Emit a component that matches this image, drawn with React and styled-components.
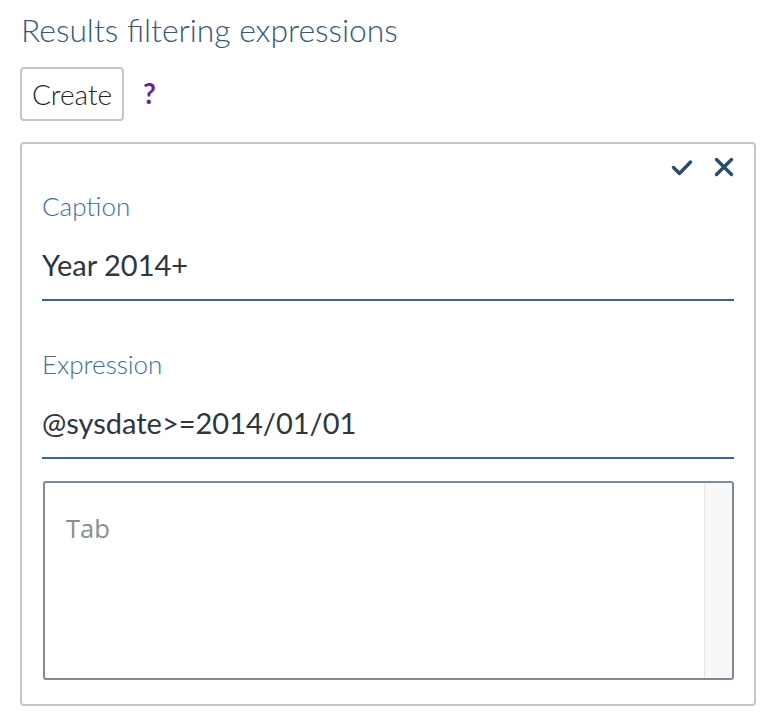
import React from 'react'
import styled, { createGlobalStyle } from 'styled-components'

const GlobalStyle = createGlobalStyle`
    body {
        margin: 0;
        background: #ffffff;
        font-family: Lato, 'Open Sans', sans-serif;
    }
`

const StyledPage = styled.div`
    display: flex;
    flex-direction: column;
    padding: 12px 20px 0 20px;
    width: 776px;
    box-sizing: border-box;
`

const StyledHeading = styled.h2`
    margin: 0 0 0 1px;
    font-weight: 300;
    font-size: 31.8px;
    line-height: 36px;
    color: #34577e;
`

const StyledToolbar = styled.div`
    display: flex;
    align-items: center;
    gap: 19px;
    margin-top: 19px;
`

const StyledButton = styled.button`
    height: 54px;
    padding: 0 10px;
    background: #ffffff;
    border: 2px solid #c3c7cc;
    border-radius: 4px;
    font-family: Lato, sans-serif;
    font-size: 28px;
    font-weight: 300;
    color: #1f2328;
    cursor: pointer;
`

const StyledHelp = styled.span`
    font-size: 28px;
    font-weight: 700;
    color: #6b1fa3;
    margin-top: -2px;
`

const StyledPanel = styled.div`
    display: flex;
    flex-direction: column;
    margin-top: 21px;
    height: 564px;
    box-sizing: border-box;
    border: 2px solid #c4c8cd;
    border-radius: 4px;
    padding: 13px 20px 0 20px;
`

const StyledActions = styled.div`
    display: flex;
    justify-content: flex-end;
    align-items: flex-start;
    gap: 21px;
    height: 20px;
`

const StyledIconButton = styled.span`
    display: inline-flex;
    color: #2b4c6e;
    cursor: pointer;
`

const StyledField = styled.div`
    display: flex;
    flex-direction: column;
    margin-top: ${({ gap }) => gap}px;
`

const StyledLabel = styled.label`
    font-size: 26px;
    font-weight: 300;
    color: #3f6d9d;
    line-height: 30px;
`

const StyledValue = styled.div`
    margin-top: 27px;
    padding-bottom: 17px;
    border-bottom: 2px solid #3b6591;
    font-size: 29px;
    font-weight: 400;
    color: #2e3640;
    line-height: 34px;
`

const StyledTextBox = styled.div`
    display: flex;
    margin: 22px 0 0 1px;
    height: 199px;
    box-sizing: border-box;
    border: 2px solid #7e8a95;
    border-radius: 3px;
    overflow: hidden;
`

const StyledPlaceholder = styled.div`
    flex: 1;
    padding: 30px 0 0 21px;
    font-family: 'Open Sans', sans-serif;
    font-size: 25.5px;
    line-height: 30px;
    color: #858f99;
`

const StyledScroll = styled.div`
    width: 27px;
    background: #f8f8f8;
    border-left: 1px solid #e6e6e6;
`

const CheckIcon = () => (
    <svg width="22" height="20" viewBox="0 0 22 20">
        <path d="M2.5 10.5l6 6L19.5 5" fill="none" stroke="currentColor" strokeWidth="3.4" strokeLinecap="round" strokeLinejoin="round" />
    </svg>
)

const CloseIcon = () => (
    <svg width="20" height="20" viewBox="0 0 20 20">
        <path d="M2.5 2.5l15 15M17.5 2.5l-15 15" fill="none" stroke="currentColor" strokeWidth="3.4" strokeLinecap="round" />
    </svg>
)

export default function App() {
    return (
        <StyledPage>
            <GlobalStyle />
            <StyledHeading>Results filtering expressions</StyledHeading>
            <StyledToolbar>
                <StyledButton>Create</StyledButton>
                <StyledHelp>?</StyledHelp>
            </StyledToolbar>
            <StyledPanel>
                <StyledActions>
                    <StyledIconButton><CheckIcon /></StyledIconButton>
                    <StyledIconButton><CloseIcon /></StyledIconButton>
                </StyledActions>
                <StyledField gap={14}>
                    <StyledLabel>Caption</StyledLabel>
                    <StyledValue>Year 2014+</StyledValue>
                </StyledField>
                <StyledField gap={48}>
                    <StyledLabel>Expression</StyledLabel>
                    <StyledValue>@sysdate&gt;=2014/01/01</StyledValue>
                </StyledField>
                <StyledTextBox>
                    <StyledPlaceholder>Tab</StyledPlaceholder>
                    <StyledScroll />
                </StyledTextBox>
            </StyledPanel>
        </StyledPage>
    )
}
